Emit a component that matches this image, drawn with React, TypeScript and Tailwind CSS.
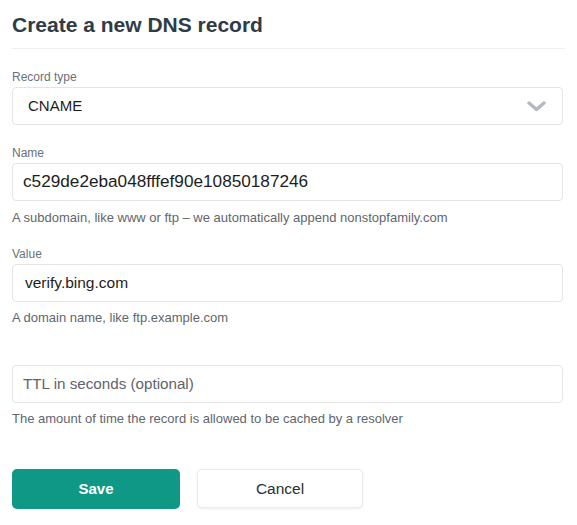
export default function App() {
  return (
    <div className="min-h-screen bg-white px-3 pt-[13px] font-['Liberation_Sans',Arial,sans-serif] text-[#2f3a44]">
      <h1 className="text-[21px] font-bold leading-6 text-[#2f3b45]">Create a new DNS record</h1>
      <div className="mt-[11px] h-px bg-[#efefef]" />

      <form className="mt-[20px] flex flex-col">
        <label className="text-[12px] leading-4 text-[#69717a]">Record type</label>
        <div className="mt-[2px] flex h-[38px] w-[551px] items-center justify-between rounded border border-[#e4e4e4] pl-[15px] pr-[16px] text-[15px] text-[#1d1d1d]">
          <span>CNAME</span>
          <svg width="19" height="11" viewBox="0 0 19 11" fill="none">
            <path d="M2 2l7.5 6.5L17 2" stroke="#b4b9bf" strokeWidth="3.4" strokeLinecap="round" strokeLinejoin="round" />
          </svg>
        </div>

        <label className="mt-[20px] text-[12px] leading-4 text-[#69717a]">Name</label>
        <div className="mt-[2px] flex h-[38px] w-[551px] items-center rounded border border-[#e4e4e4] pl-[10px] text-[17.2px] text-[#1d1d1d]">
          c529de2eba048fffef90e10850187246
        </div>
        <p className="mt-[9px] text-[13px] leading-4 text-[#5f666d]">
          A subdomain, like www or ftp – we automatically append nonstopfamily.com
        </p>

        <label className="mt-[20px] text-[12px] leading-4 text-[#69717a]">Value</label>
        <div className="mt-[2px] flex h-[38px] w-[551px] items-center rounded border border-[#e4e4e4] pl-[12px] text-[15.5px] text-[#1d1d1d]">
          verify.bing.com
        </div>
        <p className="mt-[8px] text-[13px] leading-4 text-[#5f666d]">A domain name, like ftp.example.com</p>

        <div className="mt-[39px] flex h-[38px] w-[551px] items-center rounded border border-[#e4e4e4] pl-[10px] text-[15.2px] text-[#5d646b]">
          TTL in seconds (optional)
        </div>
        <p className="mt-[8px] text-[13px] leading-4 text-[#5f666d]">
          The amount of time the record is allowed to be cached by a resolver
        </p>

        <div className="mt-[42px] flex gap-[17px]">
          <button type="button" className="h-[40px] w-[168px] rounded-[5px] bg-[#0f9886] text-[15px] font-bold text-white">
            Save
          </button>
          <button type="button" className="h-[39px] w-[166px] rounded-[5px] border border-[#ececec] bg-white text-[15.5px] text-[#2b2f33] shadow-[0_1px_3px_rgba(0,0,0,0.08)]">
            Cancel
          </button>
        </div>
      </form>
    </div>
  )
}
